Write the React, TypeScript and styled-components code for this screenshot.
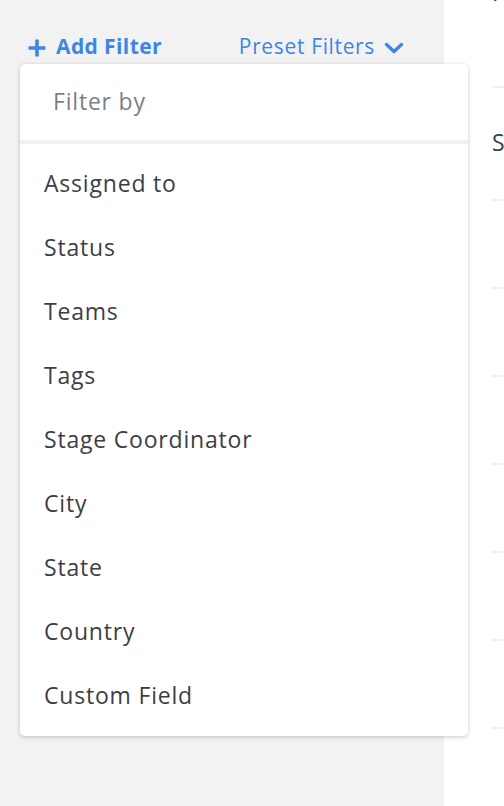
import React from "react";
import styled, { createGlobalStyle } from "styled-components";

const GlobalStyle = createGlobalStyle`
    * {
        box-sizing: border-box;
    }
    body {
        margin: 0;
        font-family: "Open Sans", Lato, sans-serif;
        background: #ffffff;
    }
`;

const filters = [
    "Assigned to",
    "Status",
    "Teams",
    "Tags",
    "Stage Coordinator",
    "City",
    "State",
    "Country",
    "Custom Field",
];

const PlusIcon = () => (
    <svg width="18" height="18" viewBox="0 0 18 18">
        <path d="M9 0.5v17M0.5 9h17" stroke="#3c86e5" strokeWidth="3.6" fill="none" />
    </svg>
);

const ChevronIcon = () => (
    <svg width="20" height="14" viewBox="0 0 20 14">
        <path d="M2.5 3.5 10 10.5 17.5 3.5" stroke="#3c86e5" strokeWidth="3.4" fill="none" strokeLinecap="round" strokeLinejoin="round" />
    </svg>
);

export default function App() {
    return (
        <Page>
            <GlobalStyle />
            <Sidebar>
                <Toolbar>
                    <AddButton>
                        <PlusIcon />
                        Add Filter
                    </AddButton>
                    <PresetButton>
                        Preset Filters
                        <ChevronIcon />
                    </PresetButton>
                </Toolbar>
                <Dropdown>
                    <DropdownHeader>Filter by</DropdownHeader>
                    <OptionList>
                        {filters.map((f) => (
                            <Option key={f}>{f}</Option>
                        ))}
                    </OptionList>
                </Dropdown>
            </Sidebar>
            <Main>
                <Row $height={88}>
                    <CutText>I</CutText>
                </Row>
                <Row $height={113}>
                    <RowLabel>S</RowLabel>
                </Row>
                {Array.from({ length: 6 }).map((_, i) => (
                    <Row key={i} $height={88} />
                ))}
            </Main>
        </Page>
    );
}

const Page = styled.div`
    display: flex;
    width: 504px;
    height: 806px;
    overflow: hidden;
`;

const Sidebar = styled.aside`
    position: relative;
    flex: 0 0 444px;
    background-color: #f2f2f2;
    height: 100%;
`;

const Toolbar = styled.div`
    display: flex;
    align-items: flex-start;
    height: 92px;
    padding: 31px 0 0 28px;
`;

const AddButton = styled.button`
    display: flex;
    align-items: center;
    gap: 10px;
    padding: 0;
    border: none;
    background: none;
    font-family: inherit;
    font-size: 21px;
    font-weight: 700;
    letter-spacing: 0.4px;
    color: #3c86e5;
    line-height: 30px;
    svg {
        margin-top: 4px;
    }
`;

const PresetButton = styled.button`
    display: flex;
    align-items: center;
    gap: 9px;
    margin-left: auto;
    margin-right: 40px;
    padding: 0;
    border: none;
    background: none;
    font-family: inherit;
    font-size: 21px;
    font-weight: 400;
    letter-spacing: 0.65px;
    color: #3c86e5;
    line-height: 30px;
    svg {
        margin-top: 3px;
    }
`;

const Dropdown = styled.div`
    position: absolute;
    top: 64px;
    left: 20px;
    width: 448px;
    background: #ffffff;
    border-radius: 5px;
    box-shadow: 0 1px 4px rgba(0, 0, 0, 0.22);
    z-index: 2;
`;

const DropdownHeader = styled.div`
    height: 80px;
    display: flex;
    align-items: center;
    padding: 0 0 2px 33px;
    font-size: 23px;
    letter-spacing: 0.8px;
    color: #7a7f86;
    border-bottom: 4px solid #f2f2f2;
`;

const OptionList = styled.ul`
    list-style: none;
    margin: 0;
    padding: 8px 0;
`;

const Option = styled.li`
    height: 64px;
    display: flex;
    align-items: center;
    padding: 0 0 3px 24px;
    font-size: 23px;
    letter-spacing: 0.8px;
    color: #3b4046;
`;

const Main = styled.main`
    flex: 1;
    padding-left: 48px;
    display: flex;
    flex-direction: column;
`;

const Row = styled.div<{ $height: number }>`
    flex: 0 0 ${(p) => p.$height}px;
    display: flex;
    align-items: center;
    border-bottom: 2px solid #f2f2f2;
    white-space: nowrap;
    font-size: 23px;
    color: #3b4046;
`;

const CutText = styled.span`
    align-self: flex-start;
    margin-top: -24px;
`;

const RowLabel = styled.span`
    margin-top: -3px;
`;
